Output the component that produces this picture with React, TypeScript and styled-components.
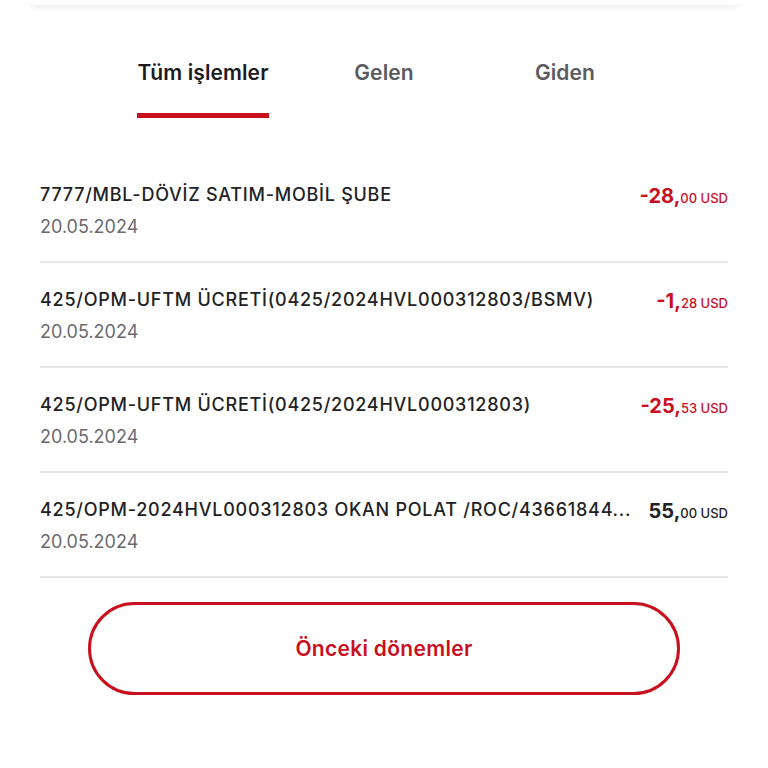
import React, { useState } from 'react';
import styled, { createGlobalStyle } from 'styled-components';

const GlobalStyle = createGlobalStyle`
  html, body {
    margin: 0;
    padding: 0;
    background: #ffffff;
  }
  body {
    font-family: Inter, "Noto Sans", "Liberation Sans", sans-serif;
    -webkit-font-smoothing: antialiased;
  }
`;

type Tx = {
  title: string;
  date: string;
  whole: string;
  cents: string;
  negative: boolean;
};

const transactions: Tx[] = [
  { title: '7777/MBL-DÖVİZ SATIM-MOBİL ŞUBE', date: '20.05.2024', whole: '-28,', cents: '00', negative: true },
  { title: '425/OPM-UFTM ÜCRETİ(0425/2024HVL000312803/BSMV)', date: '20.05.2024', whole: '-1,', cents: '28', negative: true },
  { title: '425/OPM-UFTM ÜCRETİ(0425/2024HVL000312803)', date: '20.05.2024', whole: '-25,', cents: '53', negative: true },
  { title: '425/OPM-2024HVL000312803 OKAN POLAT /ROC/43661844...', date: '20.05.2024', whole: '55,', cents: '00', negative: false },
];

const tabs = ['Tüm işlemler', 'Gelen', 'Giden'];

export default function App() {
  const [active, setActive] = useState(0);

  return (
    <>
      <GlobalStyle />
      <Page>
        <TopCard />
        <TabBar>
          {tabs.map((t, i) => (
            <Tab key={t} onClick={() => setActive(i)}>
              <TabLabel $active={i === active}>{t}</TabLabel>
            </Tab>
          ))}
        </TabBar>
        <List>
          {transactions.map((tx, i) => (
            <Row key={i}>
              <Info>
                <Title>{tx.title}</Title>
                <DateText>{tx.date}</DateText>
              </Info>
              <Amount $negative={tx.negative}>
                <Whole>{tx.whole}</Whole>
                <Small>{tx.cents} USD</Small>
              </Amount>
            </Row>
          ))}
        </List>
        <ButtonWrap>
          <OutlineButton>Önceki dönemler</OutlineButton>
        </ButtonWrap>
      </Page>
    </>
  );
}

const Page = styled.div`
  width: 768px;
  height: 768px;
  overflow: hidden;
  display: flex;
  flex-direction: column;
`;

const TopCard = styled.div`
  margin: 0 28px 0 30px;
  height: 5px;
  background: #fff;
  border-radius: 0 0 10px 10px;
  box-shadow: 0 2px 6px rgba(0, 0, 0, 0.09);
`;

const TabBar = styled.div`
  display: flex;
  justify-content: center;
  padding-top: 52px;
`;

const Tab = styled.button`
  width: 181px;
  background: none;
  border: none;
  padding: 0;
  cursor: pointer;
  display: flex;
  justify-content: center;
`;

const TabLabel = styled.span<{ $active: boolean }>`
  display: block;
  font-family: Inter, "Noto Sans", sans-serif;
  font-size: 21px;
  font-weight: 600;
  line-height: 32px;
  letter-spacing: 0.1px;
  color: ${(p) => (p.$active ? '#1c1c1e' : '#5a5a60')};
  padding-bottom: 24px;
  border-bottom: 5px solid ${(p) => (p.$active ? '#c8101e' : 'transparent')};
`;

const List = styled.div`
  margin: 40px 40px 0 40px;
  display: flex;
  flex-direction: column;
`;

const Row = styled.div`
  display: flex;
  align-items: flex-start;
  justify-content: space-between;
  gap: 24px;
  height: 103px;
  border-bottom: 2px solid #e8e8e8;
`;

const Info = styled.div`
  flex: 1;
  min-width: 0;
  padding-top: 26px;
`;

const Title = styled.div`
  font-size: 18px;
  font-weight: 500;
  letter-spacing: 0.75px;
  color: #222224;
  line-height: 22px;
  white-space: nowrap;
`;

const DateText = styled.div`
  margin-top: 10px;
  font-size: 18px;
  font-weight: 400;
  color: #6a6a6e;
  line-height: 22px;
`;

const Amount = styled.div<{ $negative: boolean }>`
  padding-top: 26px;
  white-space: nowrap;
  color: ${(p) => (p.$negative ? '#c8101e' : '#222224')};
`;

const Whole = styled.span`
  font-size: 20px;
  font-weight: 700;
`;

const Small = styled.span`
  font-size: 13px;
  font-weight: 500;
`;

const ButtonWrap = styled.div`
  display: flex;
  justify-content: center;
  margin-top: 24px;
`;

const OutlineButton = styled.button`
  width: 592px;
  height: 93px;
  border: 3px solid #c8101e;
  border-radius: 47px;
  background: #fff;
  color: #c8101e;
  font-family: Inter, "Noto Sans", sans-serif;
  font-size: 21px;
  font-weight: 600;
  letter-spacing: 0.3px;
  cursor: pointer;
`;
